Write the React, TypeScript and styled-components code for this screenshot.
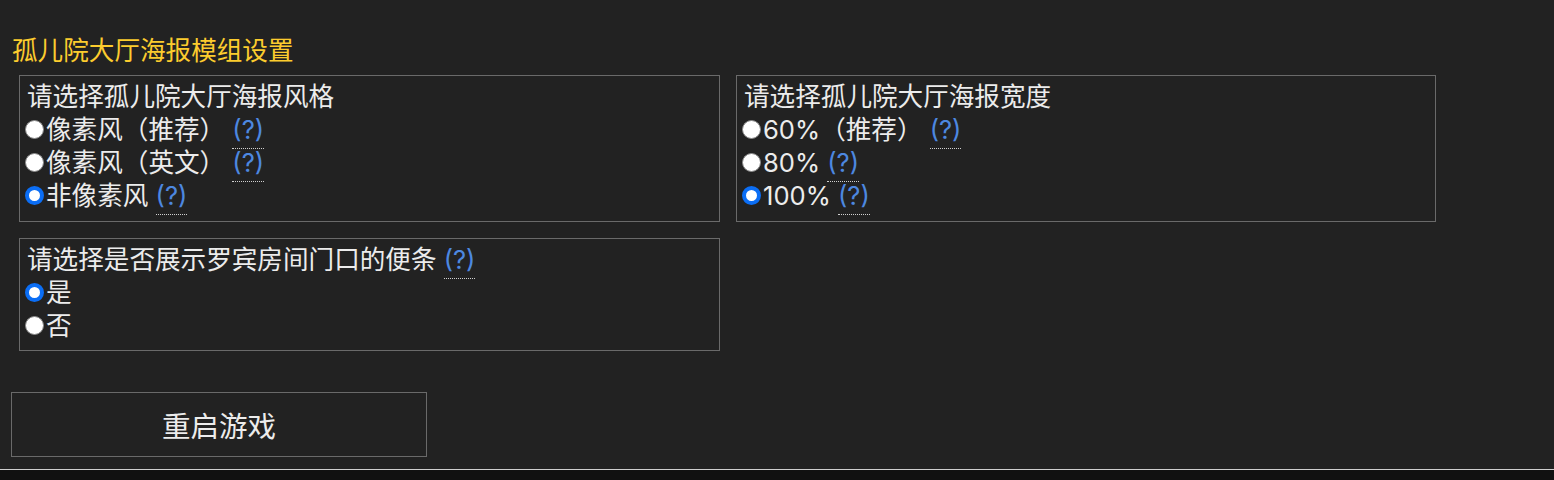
import React, { useState } from "react";
import styled, { createGlobalStyle } from "styled-components";

const Global = createGlobalStyle`
  html, body { margin: 0; padding: 0; background: #222222; }
  body {
    font-family: "Inter", "Noto Sans CJK SC", sans-serif;
    color: #ececec;
    font-size: 25.6px;
    overflow: hidden;
  }
`;

const Page = styled.div`
  padding: 34px 0 0 11px;
`;

const Title = styled.div`
  color: #fccc2e;
  font-size: 25.6px;
  line-height: 33px;
  padding-left: 1px;
`;

const Grid = styled.div`
  display: grid;
  grid-template-columns: 701px 700px;
  gap: 16px;
  margin: 8px 0 0 8px;
  align-items: start;
`;

const Box = styled.div<{ $tight?: boolean }>`
  box-sizing: border-box;
  border: 1px solid #6a6a6a;
  padding: 4px 6px ${(p) => (p.$tight ? "8px" : "9px")} 5px;
`;

const Line = styled.div<{ $indent?: boolean }>`
  display: flex;
  align-items: center;
  height: 33px;
  line-height: 33px;
  white-space: nowrap;
  padding-left: ${(p) => (p.$indent ? "2px" : "0")};
`;

const Radio = styled.span<{ $on: boolean }>`
  box-sizing: border-box;
  width: 19px;
  height: 19px;
  flex: none;
  border-radius: 50%;
  background: #ffffff;
  border: ${(p) => (p.$on ? "4px solid #0b6ef5" : "1.5px solid #8a8a8a")};
  margin-right: 2px;
  cursor: pointer;
`;

const Help = styled.span`
  display: inline-block;
  color: #4d88e0;
  line-height: 37px;
  border-bottom: 1px dotted #d0d0d0;
  margin-left: 0.28em;
  cursor: help;
`;

const Button = styled.button`
  box-sizing: border-box;
  display: block;
  width: 416px;
  height: 65px;
  margin-top: 41px;
  background: transparent;
  border: 1px solid #6a6a6a;
  color: #ececec;
  font-family: "Inter", "Noto Sans CJK SC", sans-serif;
  font-size: 28.5px;
  cursor: pointer;
`;

const Footer = styled.div`
  margin-top: 12px;
  height: 40px;
  border-top: 1px solid #cfcfcf;
  background: #111111;
`;

type Opt = { label: string; help?: boolean };

function Group({
  title,
  titleHelp,
  options,
  initial,
  tight,
}: {
  title: string;
  titleHelp?: boolean;
  options: Opt[];
  initial: number;
  tight?: boolean;
}) {
  const [sel, setSel] = useState(initial);
  return (
    <Box $tight={tight}>
      <Line $indent>
        <span>{title}</span>
        {titleHelp && <Help>(?)</Help>}
      </Line>
      {options.map((o, i) => (
        <Line key={i} onClick={() => setSel(i)}>
          <Radio $on={sel === i} role="radio" aria-checked={sel === i} />
          <span>{o.label}</span>
          {o.help && <Help>(?)</Help>}
        </Line>
      ))}
    </Box>
  );
}

export default function App() {
  return (
    <>
      <Global />
      <Page>
        <Title>孤儿院大厅海报模组设置</Title>
        <Grid>
          <Group
            title="请选择孤儿院大厅海报风格"
            options={[
              { label: "像素风（推荐）", help: true },
              { label: "像素风（英文）", help: true },
              { label: "非像素风", help: true },
            ]}
            initial={2}
          />
          <Group
            title="请选择孤儿院大厅海报宽度"
            options={[
              { label: "60%（推荐）", help: true },
              { label: "80%", help: true },
              { label: "100%", help: true },
            ]}
            initial={2}
          />
          <Group
            title="请选择是否展示罗宾房间门口的便条"
            titleHelp
            tight
            options={[{ label: "是" }, { label: "否" }]}
            initial={0}
          />
        </Grid>
        <Button>重启游戏</Button>
      </Page>
      <Footer />
    </>
  );
}
